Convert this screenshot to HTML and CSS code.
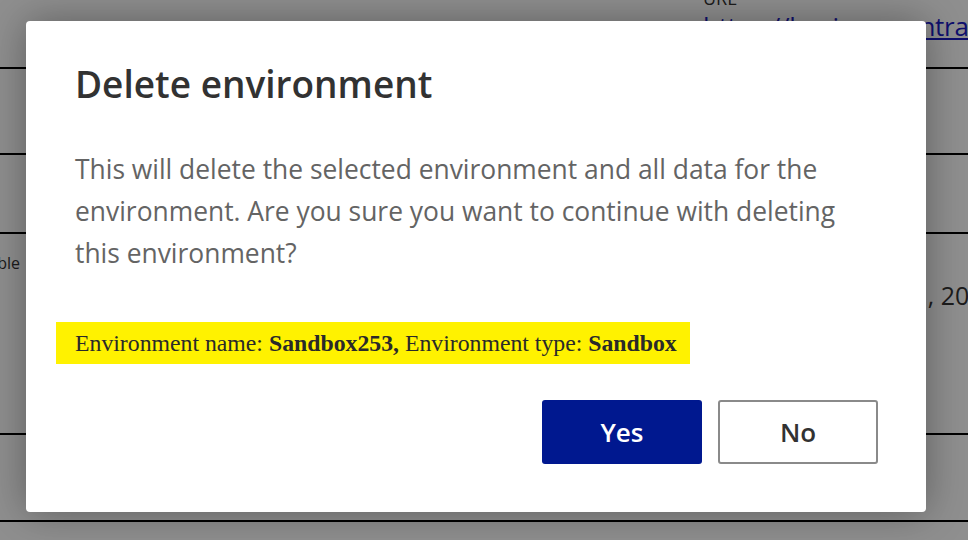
FILE: index.html
```html
<!DOCTYPE html>
<html>
<head>
<meta charset="utf-8">
<link rel="stylesheet" href="styles.css">
</head>
<body>
<div class="page">
  <div class="row row-1">
    <div class="cell-left"></div>
    <div class="cell-right url-cell">
      <div class="url-label">URL</div>
      <a class="url-link" href="#">https://businesscentral.dynamics.com</a>
    </div>
  </div>
  <div class="row row-2"></div>
  <div class="row row-3"></div>
  <div class="row row-4">
    <div class="cell-left"><span class="side-text">Available</span></div>
    <div class="cell-right date-cell"><span class="date-text">March 14, 2023</span></div>
  </div>
  <div class="row row-5"></div>
  <div class="row row-6"></div>
</div>
<div class="overlay"></div>
<div class="dialog" role="dialog">
  <h1 class="dialog-title">Delete environment</h1>
  <p class="dialog-text">This will delete the selected environment and all data for the environment. Are you sure you want to continue with deleting this environment?</p>
  <div class="highlight">Environment name: <b>Sandbox253,</b> Environment type: <b>Sandbox</b></div>
  <div class="actions">
    <button class="btn btn-primary">Yes</button>
    <button class="btn btn-secondary">No</button>
  </div>
</div>
</body>
</html>
```
FILE: styles.css
```css
html, body {
  margin: 0;
  padding: 0;
  width: 968px;
  height: 540px;
  overflow: hidden;
  background: #ffffff;
  font-family: "Open Sans", "Noto Sans", sans-serif;
}

.page {
  display: flex;
  flex-direction: column;
}

.row {
  display: flex;
  justify-content: space-between;
  border-bottom: 2px solid #000;
  box-sizing: border-box;
}

.row-1 { height: 69px; }
.row-2 { height: 86px; }
.row-3 { height: 79px; }
.row-4 { height: 201px; }
.row-5 { height: 87px; }
.row-6 { height: 40px; border-bottom: none; }

.url-cell {
  display: flex;
  flex-direction: column;
  width: 265px;
  margin-top: -12px;
  white-space: nowrap;
  overflow: hidden;
}

.url-label {
  font-size: 18px;
  color: #333;
  line-height: 20px;
}

.url-link {
  font-size: 26px;
  color: #1c1cc4;
  line-height: 32px;
  margin-top: 2px;
  text-decoration: underline;
  letter-spacing: -0.3px;
}

.row-4 .cell-left {
  width: 20px;
  overflow: hidden;
  direction: rtl;
}

.side-text {
  display: block;
  font-size: 16px;
  color: #333;
  margin-top: 18px;
  white-space: nowrap;
}

.date-cell {
  width: 40px;
  overflow: hidden;
  white-space: nowrap;
  display: flex;
  justify-content: flex-end;
}

.date-text {
  display: block;
  flex-shrink: 0;
  font-size: 25px;
  color: #333;
  margin-top: 44px;
  margin-right: -30px;
}

.overlay {
  position: absolute;
  inset: 0;
  background: rgba(0, 0, 0, 0.44);
}

.dialog {
  position: absolute;
  left: 26px;
  top: 21px;
  width: 900px;
  height: 491px;
  box-sizing: border-box;
  background: #fff;
  border-radius: 4px;
  box-shadow: 0 0 40px rgba(0, 0, 0, 0.35);
  padding: 43px 48px 48px 49px;
  display: flex;
  flex-direction: column;
}

.dialog-title {
  margin: 0;
  font-size: 37px;
  font-weight: 600;
  color: #323232;
  line-height: 40px;
}

.dialog-text {
  margin: 44px 0 0 0;
  font-size: 26.4px;
  line-height: 42px;
  color: #646464;
  max-width: 790px;
}

.highlight {
  margin: 48px 0 0 -19px;
  align-self: flex-start;
  background: #fff200;
  padding: 0 13px 0 19px;
  height: 42px;
  line-height: 42px;
  font-family: "Liberation Serif", "Times New Roman", serif;
  font-size: 23.75px;
  color: #2a2a2a;
}

.actions {
  display: flex;
  justify-content: flex-end;
  gap: 16px;
  margin-top: 36px;
}

.btn {
  width: 160px;
  height: 64px;
  border-radius: 3px;
  font-family: "Open Sans", "Noto Sans", sans-serif;
  font-size: 26px;
  font-weight: 600;
  box-sizing: border-box;
  cursor: pointer;
}

.btn-primary {
  background: #00188f;
  color: #fff;
  border: none;
}

.btn-secondary {
  background: #fff;
  color: #323232;
  border: 2px solid #8a8a8a;
}
```
